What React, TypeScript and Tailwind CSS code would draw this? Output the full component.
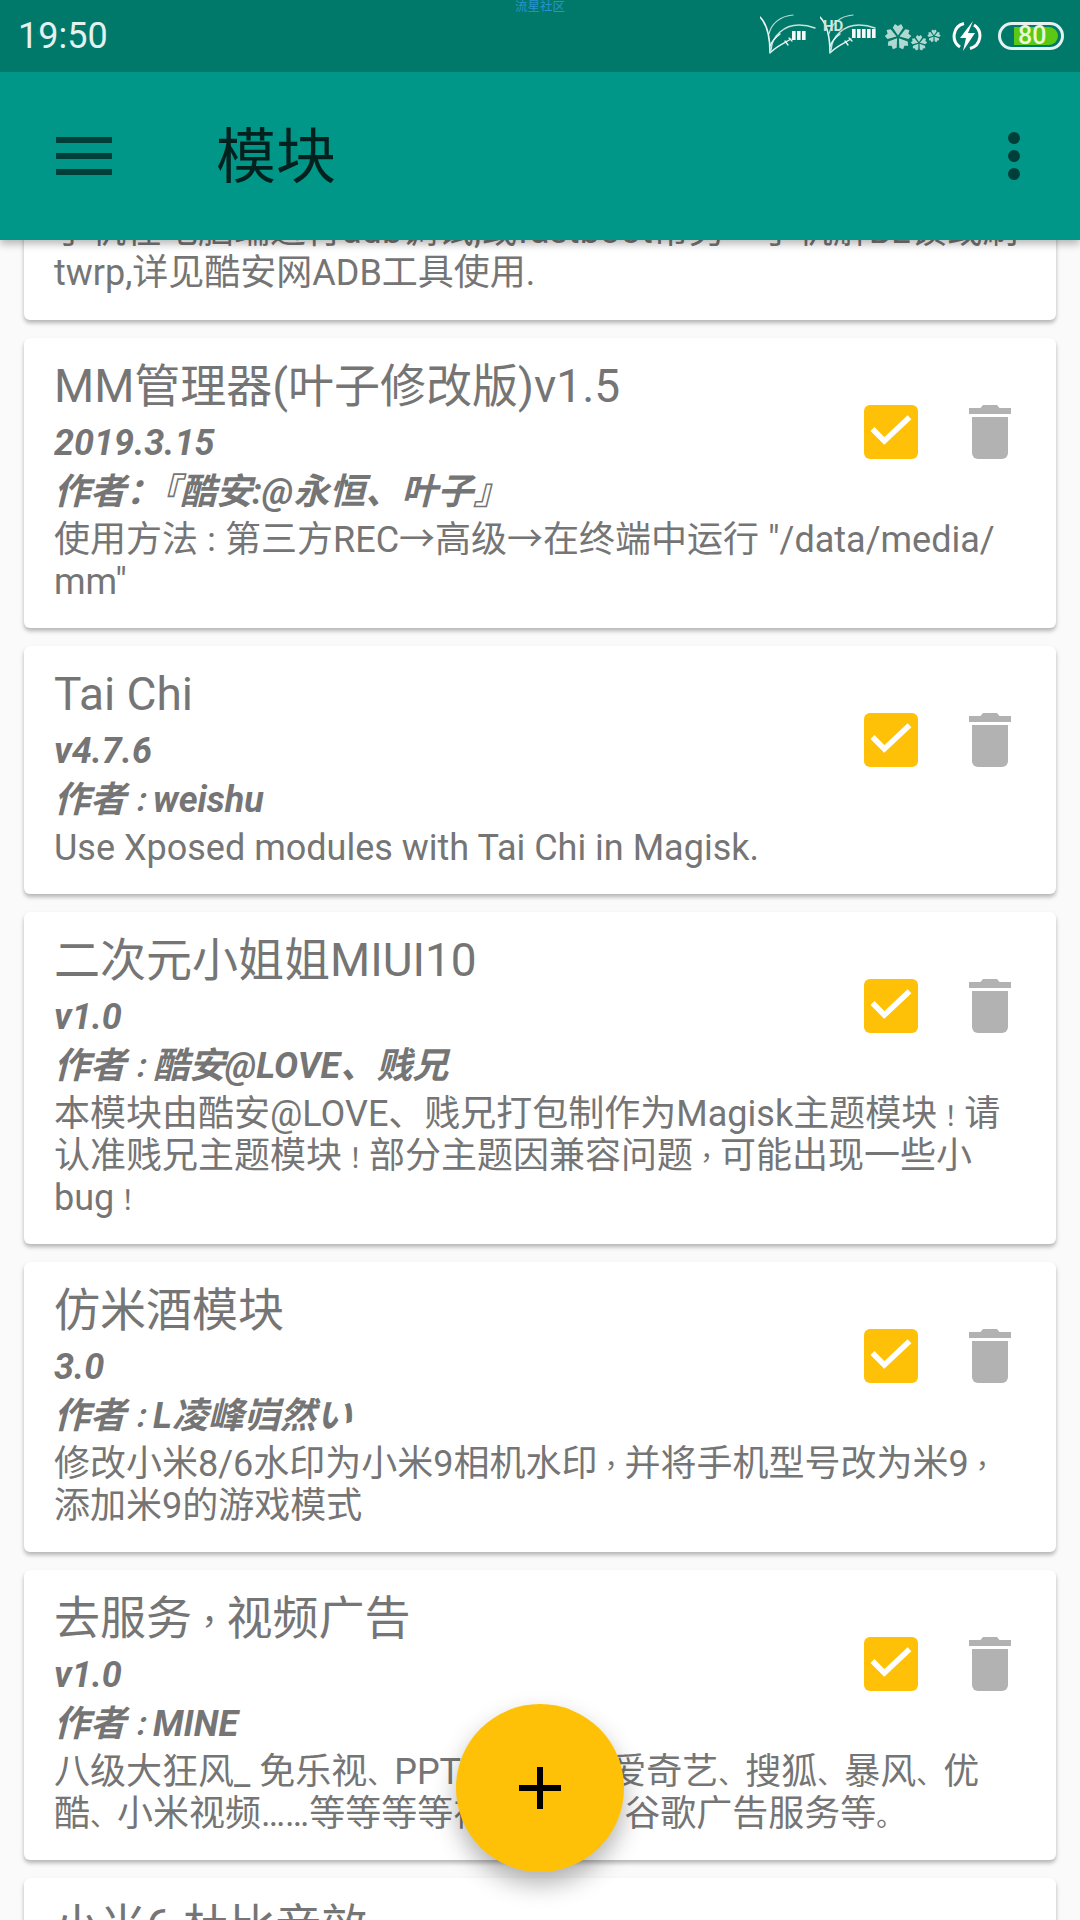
const cards = [
  {
    title: "MM管理器(叶子修改版)v1.5",
    version: "2019.3.15",
    author: "作者：『酷安:@永恒、叶子』",
    desc: "使用方法：第三方REC→高级→在终端中运行 \"/data/media/\nmm\"",
  },
  {
    title: "Tai Chi",
    version: "v4.7.6",
    author: "作者：weishu",
    desc: "Use Xposed modules with Tai Chi in Magisk.",
  },
  {
    title: "二次元小姐姐MIUI10",
    version: "v1.0",
    author: "作者：酷安@LOVE、贱兄",
    desc: "本模块由酷安@LOVE、贱兄打包制作为Magisk主题模块！请\n认准贱兄主题模块！部分主题因兼容问题，可能出现一些小\nbug！",
  },
  {
    title: "仿米酒模块",
    version: "3.0",
    author: "作者：L凌峰岿然い",
    desc: "修改小米8/6水印为小米9相机水印，并将手机型号改为米9，\n添加米9的游戏模式",
  },
  {
    title: "去服务，视频广告",
    version: "v1.0",
    author: "作者：MINE",
    desc: "八级大狂风_ 免乐视、PPTV、腾讯、爱奇艺、搜狐、暴风、优\n酷、小米视频……等等等等视频广告、谷歌广告服务等。",
    tight: true,
  },
];

// the phone font draws ，：！ centred and narrower than a full cell
const Txt = ({ text, tight }: { text: string; tight?: boolean }) => (
  <>
    {text.split(tight ? /([，：！、。])/ : /([，！]|：(?!『))/).map((part, i) =>
      i % 2 === 1 ? (
        <span
          key={i}
          className={
            part === "、" || part === "。"
              ? "text-[0.75em] leading-[0px]"
              : "text-[0.75em] leading-[0px] [font-family:'Noto_Sans_CJK_TC',sans-serif]"
          }
        >
          {part}
        </span>
      ) : (
        part
      ),
    )}
  </>
);

const Trash = () => (
  <svg width="42" height="54" viewBox="0 0 42 54" className="shrink-0">
    <path d="M0 3h11.5L14 0h14l2.5 3H42v6H0z" fill="#b2b2b2" />
    <path d="M3 12h36v36a6 6 0 0 1-6 6H9a6 6 0 0 1-6-6z" fill="#b2b2b2" />
  </svg>
);

const CheckBox = () => (
  <svg width="54" height="54" viewBox="0 0 54 54" className="shrink-0">
    <rect width="54" height="54" rx="6" fill="#ffc107" />
    <path d="M8.5 24 20.3 36 45.5 12.3" fill="none" stroke="#fff" strokeWidth="5.5" />
  </svg>
);

// grass shaped signal icon from the MIUI theme
const Signal = ({ bars, top }: { bars: number; top: number }) => (
  <svg width="57" height="52" viewBox="0 0 57 52" fill="none" stroke="#eaf4f1" strokeLinecap="round" className="shrink-0">
    <path d="M0 7C6 13 10 24 10 43" strokeWidth="1.6" />
    <path d="M9 24C11 14 20 6 33 5" strokeWidth="1.2" opacity="0.8" />
    <path d="M11 40C12 26 24 15 39 15c6 0 11 1 16 3" strokeWidth="1.5" opacity="0.85" />
    <path d="M10 36c2-5 6-9 10-12" strokeWidth="1.4" />
    <path d="M11 42c6-6 12-8 20-13" strokeWidth="1.3" />
    <path d="M25 31l3 4M29 28l3 3" strokeWidth="1.3" />
    {Array.from({ length: bars }).map((_, i) => (
      <rect key={i} x={32 + i * 5} y={top} width="3.6" height="9" fill="#f4faf8" stroke="none" />
    ))}
  </svg>
);

const Blossom = ({ r, x, y }: { r: number; x: number; y: number }) => (
  <g transform={`translate(${x} ${y}) scale(${r})`} fill="#b0d8d0">
    {[0, 72, 144, 216, 288].map((a) => (
      <path key={a} d="M0-.12-.4-.72-.24-1 0-.84.24-1 .4-.72Z" transform={`rotate(${a})`} />
    ))}
  </g>
);

const StatusBar = () => (
  <div className="relative flex h-[72px] items-center justify-between bg-[#00796b] pl-[18px] pr-[16px]">
    <span className="absolute left-[515px] top-0 text-[12.5px] leading-[13px] text-[#2a92d2]">流星社区</span>
    <span className="text-[36px] leading-none text-[#e4f1ee]">19:50</span>
    <div className="flex items-center">
      <Signal bars={3} top={21} />
      <div className="relative ml-[3px]">
        <Signal bars={5} top={19} />
        <span className="absolute left-[3px] top-[9px] text-[15px] font-bold leading-none text-[#cfe5e0]">HD</span>
      </div>
      <svg width="56" height="30" viewBox="0 0 56 30" className="ml-[8px] shrink-0">
        <Blossom r={13} x={13} y={16} />
        <Blossom r={8} x={34} y={22} />
        <Blossom r={6.5} x={49} y={15} />
      </svg>
      <svg width="30" height="30" viewBox="0 0 30 30" className="ml-[11px] shrink-0">
        <path d="M12 2.5A13 13 0 0 0 8 26M18 27.5A13 13 0 0 0 22 4" fill="none" stroke="#fff" strokeWidth="3" />
        <path d="M21 0 8 17h6l-3 13 12-18h-7z" fill="#fff" />
      </svg>
      <div className="relative ml-[16px] flex h-[28px] w-[66px] items-center rounded-full border-[3px] border-[#e4f1ee] pl-[13px]">
        <div className="h-[18px] w-[44px] rounded-r-full bg-[#5ac814]" />
        <span className="absolute left-[17px] top-[-3px] text-[25px] font-medium leading-[28px] text-[#e8f7dc]">80</span>
      </div>
    </div>
  </div>
);

const Toolbar = () => (
  <div className="flex h-[168px] items-center bg-[#009688] pl-[56px] pr-[60px] shadow-[0_4px_8px_rgba(0,0,0,0.28)]">
    <div className="flex w-[56px] flex-col gap-[10px]">
      <span className="h-[6px] bg-[#003f39]" />
      <span className="h-[6px] bg-[#003f39]" />
      <span className="h-[6px] bg-[#003f39]" />
    </div>
    <span className="ml-[104px] mt-[4px] flex-1 text-[60px] leading-none text-[#00211e]">模块</span>
    <div className="flex flex-col gap-[6px]">
      <span className="h-[12px] w-[12px] rounded-full bg-[#003f39]" />
      <span className="h-[12px] w-[12px] rounded-full bg-[#003f39]" />
      <span className="h-[12px] w-[12px] rounded-full bg-[#003f39]" />
    </div>
  </div>
);

const Card = ({ title, version, author, desc, tight }: (typeof cards)[number] & { tight?: boolean }) => (
  <div className="rounded-[6px] bg-white pb-[25px] pl-[30px] pr-[30px] pt-[20px] shadow-[0_3px_4px_rgba(0,0,0,0.28)]">
    <div className="flex items-start">
      <div className="min-w-0 flex-1">
        <div className="text-[46px] leading-[56px] text-[#757575]">
          <Txt text={title} />
        </div>
        <div className="mt-[5px] text-[36px] font-bold italic leading-[49px] text-[#757575]">{version}</div>
        <div className="text-[36px] font-bold italic leading-[49px] text-[#757575]">
          <Txt text={author} />
        </div>
      </div>
      <div className="mr-[15px] mt-[47px] flex items-center gap-[51px]">
        <CheckBox />
        <Trash />
      </div>
    </div>
    <div className="mt-[2px] whitespace-pre-line text-[36px] leading-[42px] text-[#757575]">
      <Txt text={desc} tight={tight} />
    </div>
  </div>
);

export default function App() {
  return (
    <div className="relative flex h-[1920px] w-[1080px] flex-col overflow-hidden bg-[#fafafa] [font-family:Roboto,'Noto_Sans_CJK_SC',sans-serif]">
      <div className="relative z-10 shrink-0">
        <StatusBar />
        <Toolbar />
      </div>
      <div className="mt-[-30px] flex flex-1 flex-col gap-[18px] px-[24px]">
        <div className="rounded-[6px] bg-white pb-[26px] pl-[30px] pr-[30px] shadow-[0_3px_4px_rgba(0,0,0,0.28)]">
          <div className="whitespace-pre-line text-[36px] leading-[42px] text-[#757575]">
            {"手机在电脑端进行adb调试,或fastboot帮另一手机解BL锁或刷\ntwrp,详见酷安网ADB工具使用."}
          </div>
        </div>
        {cards.map((c) => (
          <Card key={c.title} {...c} />
        ))}
        <div className="rounded-[6px] bg-white pb-[26px] pl-[30px] pt-[20px] shadow-[0_3px_4px_rgba(0,0,0,0.28)]">
          <div className="text-[46px] leading-[56px] text-[#757575]">小米6 杜比音效</div>
        </div>
      </div>
      <button className="absolute bottom-[48px] left-[456px] flex h-[168px] w-[168px] items-center justify-center rounded-full bg-[#ffc107] shadow-[0_12px_24px_rgba(0,0,0,0.3)]">
        <svg width="42" height="42" viewBox="0 0 42 42">
          <path d="M18 0h6v18h18v6H24v18h-6V24H0v-6h18z" fill="#000" />
        </svg>
      </button>
    </div>
  );
}
